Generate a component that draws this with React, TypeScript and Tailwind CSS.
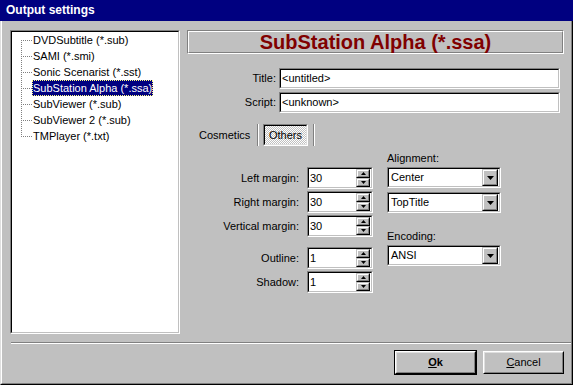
import React from 'react';

const formats = [
    'DVDSubtitle (*.sub)',
    'SAMI (*.smi)',
    'Sonic Scenarist (*.sst)',
    'SubStation Alpha (*.ssa)',
    'SubViewer (*.sub)',
    'SubViewer 2 (*.sub)',
    'TMPlayer (*.txt)',
];

// classic sunken field: gray/white outer edge, black/silver inner edge
const Sunken = ({ className, children }: { className: string; children?: React.ReactNode }) => (
    <div className={`border border-t-[#808080] border-l-[#808080] border-b-white border-r-white ${className}`}>
        <div className="flex h-full w-full items-center border border-t-black border-l-black border-b-[#c0c0c0] border-r-[#c0c0c0] bg-white">
            {children}
        </div>
    </div>
);

const SmallRaised = ({ className, children }: { className: string; children?: React.ReactNode }) => (
    <div className={`border border-t-[#c0c0c0] border-l-[#c0c0c0] border-b-black border-r-black ${className}`}>
        <div className="flex h-full w-full items-center justify-center border border-t-white border-l-white border-b-[#808080] border-r-[#808080] bg-[#c0c0c0]">
            {children}
        </div>
    </div>
);

const Arrow = ({ up, w, h }: { up?: boolean; w: number; h: number }) => (
    <svg width={w} height={h} viewBox={`0 0 ${w} ${h}`}>
        <polygon
            points={up ? `${w / 2},0 ${w},${h} 0,${h}` : `0,0 ${w},0 ${w / 2},${h}`}
            fill="black"
        />
    </svg>
);

const Spin = ({ value }: { value: string }) => (
    <Sunken className="h-[22px] w-[66px]">
        <span className="flex-1 pl-[1px]">{value}</span>
        <div className="mr-[1px] flex h-full w-[14px] flex-col">
            <SmallRaised className="h-[9px] w-full">
                <Arrow up w={5} h={3} />
            </SmallRaised>
            <SmallRaised className="h-[9px] w-full">
                <Arrow w={5} h={3} />
            </SmallRaised>
        </div>
    </Sunken>
);

const Combo = ({ value }: { value: string }) => (
    <Sunken className="h-[21px] w-[114px]">
        <span className="flex-1 pl-[2px]">{value}</span>
        <SmallRaised className="mr-[1px] h-full w-[16px]">
            <Arrow w={7} h={4} />
        </SmallRaised>
    </Sunken>
);

const TreeLines = ({ first, last }: { first: boolean; last: boolean }) => {
    const dots: React.ReactNode[] = [];
    for (let y = first ? 8 : 0; y <= (last ? 8 : 15); y += 2) {
        dots.push(<rect key={`v${y}`} x={9} y={y} width={1} height={1} fill="#808080" />);
    }
    for (let x = 11; x < 20; x += 2) {
        dots.push(<rect key={`h${x}`} x={x} y={8} width={1} height={1} fill="#808080" />);
    }
    return (
        <svg width={20} height={16} className="shrink-0">
            {dots}
        </svg>
    );
};

const SpinRow = ({ label, value, className = '' }: { label: string; value: string; className?: string }) => (
    <div className={`flex items-center ${className}`}>
        <span className="w-[112px] text-right">{label}</span>
        <div className="ml-[8px]">
            <Spin value={value} />
        </div>
    </div>
);

export default function App() {
    return (
        <div className="flex h-[385px] w-[573px] flex-col bg-[#c0c0c0] font-['Liberation_Sans',Arial,sans-serif] text-[11px] leading-[13px] text-black select-none">
            <div className="flex h-[21px] shrink-0 items-center bg-[#000080] pl-[6px] text-[12px] font-bold text-white">
                Output settings
            </div>
            <div className="flex flex-1 flex-col border-b border-l border-r border-b-black border-l-[#dfdfdf] border-r-black">
                <div className="flex flex-1 flex-col border-b border-l border-r border-b-[#808080] border-l-white border-r-[#808080]">
                    <div className="mt-[9px] flex">
                        {/* format tree */}
                        <div className="ml-[8px] h-[304px] w-[170px] border border-t-[#808080] border-l-[#808080] border-b-white border-r-white">
                            <div className="h-full w-full border border-t-black border-l-black border-b-[#c0c0c0] border-r-[#c0c0c0] bg-white pt-[0px]">
                                {formats.map((f, i) => (
                                    <div key={f} className="flex h-[16px] items-center">
                                        <TreeLines first={i === 0} last={i === formats.length - 1} />
                                        <span
                                            className={
                                                i === 3
                                                    ? 'bg-[#000080] px-[1px] leading-[16px] text-white outline-1 -outline-offset-1 outline-dotted outline-[#ffff80]'
                                                    : 'px-[1px] leading-[16px]'
                                            }
                                        >
                                            {f}
                                        </span>
                                    </div>
                                ))}
                            </div>
                        </div>

                        {/* settings panel */}
                        <div className="ml-[7px] flex w-[377px] flex-col">
                            <div className="h-[24px] border border-t-[#808080] border-l-[#808080] border-b-white border-r-white">
                                <div className="flex h-full items-center justify-center border border-t-white border-l-white border-b-[#808080] border-r-[#808080] text-[20px] font-bold text-[#800000]">
                                    SubStation Alpha (*.ssa)
                                </div>
                            </div>

                            <div className="mt-[14px] flex items-center">
                                <span className="w-[89px] text-right">Title:</span>
                                <Sunken className="ml-[3px] h-[21px] w-[281px]">
                                    <span className="pl-[1px]">&lt;untitled&gt;</span>
                                </Sunken>
                            </div>
                            <div className="mt-[3px] flex items-center">
                                <span className="w-[89px] text-right">Script:</span>
                                <Sunken className="ml-[3px] h-[21px] w-[281px]">
                                    <span className="pl-[1px]">&lt;unknown&gt;</span>
                                </Sunken>
                            </div>

                            <div className="mt-[11px] flex h-[22px] items-center">
                                <span className="ml-[12px] w-[58px]">Cosmetics</span>
                                <div className="h-[22px] w-[2px] border-l border-r border-l-[#808080] border-r-white" />
                                <div className="ml-[4px] h-[22px] w-[45px] border border-t-[#808080] border-l-[#808080] border-b-white border-r-white">
                                    <div className="flex h-full items-center justify-center border border-t-black border-l-black border-b-[#dfdfdf] border-r-[#dfdfdf] bg-[image:repeating-conic-gradient(#ffffff_0%_25%,#c0c0c0_0%_50%)] bg-[length:2px_2px]">
                                        Others
                                    </div>
                                </div>
                                <div className="ml-[5px] h-[22px] w-[2px] border-l border-r border-l-[#808080] border-r-white" />
                            </div>

                            <div className="mt-[6px] flex items-start">
                                <div className="flex flex-col pt-[15px]">
                                    <SpinRow label="Left margin:" value="30" />
                                    <SpinRow label="Right margin:" value="30" className="mt-[2px]" />
                                    <SpinRow label="Vertical margin:" value="30" className="mt-[2px]" />
                                    <SpinRow label="Outline:" value="1" className="mt-[10px]" />
                                    <SpinRow label="Shadow:" value="1" className="mt-[2px]" />
                                </div>
                                <div className="ml-[14px] flex flex-col">
                                    <span className="h-[13px]">Alignment:</span>
                                    <div className="mt-[2px]">
                                        <Combo value="Center" />
                                    </div>
                                    <div className="mt-[4px]">
                                        <Combo value="TopTitle" />
                                    </div>
                                    <span className="mt-[17px] h-[13px]">Encoding:</span>
                                    <div className="mt-[2px]">
                                        <Combo value="ANSI" />
                                    </div>
                                </div>
                            </div>
                        </div>
                    </div>

                    <div className="ml-[9px] mt-[8px] h-[2px] border-b border-t border-b-white border-t-[#808080]" />

                    <div className="mt-[6px] flex items-start justify-end pr-[7px]">
                        <div className="h-[25px] w-[83px] border border-black">
                            <div className="h-full w-full border border-t-white border-l-white border-b-black border-r-black">
                                <div className="flex h-full items-center justify-center border border-t-[#dfdfdf] border-l-[#dfdfdf] border-b-[#808080] border-r-[#808080] font-bold">
                                    <span>
                                        <span className="underline">O</span>k
                                    </span>
                                </div>
                            </div>
                        </div>
                        <div className="ml-[6px] mt-[1px] h-[23px] w-[81px] border border-t-white border-l-white border-b-black border-r-black">
                            <div className="flex h-full items-center justify-center border border-t-[#dfdfdf] border-l-[#dfdfdf] border-b-[#808080] border-r-[#808080]">
                                <span>
                                    <span className="underline">C</span>ancel
                                </span>
                            </div>
                        </div>
                    </div>
                </div>
            </div>
        </div>
    );
}
